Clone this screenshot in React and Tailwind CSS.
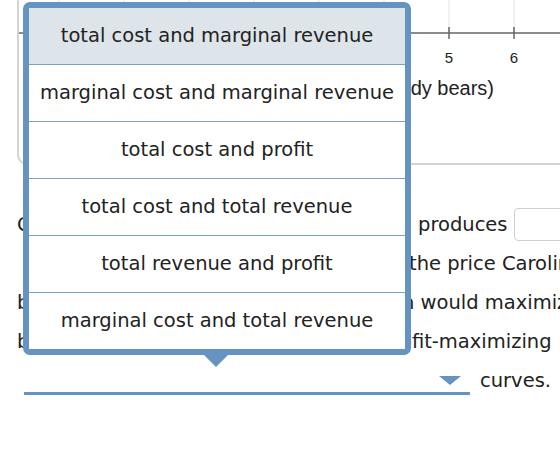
import React from 'react';

const options = [
  'total cost and marginal revenue',
  'marginal cost and marginal revenue',
  'total cost and profit',
  'total cost and total revenue',
  'total revenue and profit',
  'marginal cost and total revenue',
];

const ticks = [40, 105, 170, 235, 300, 365, 430, 495];

const QuantityAxis = () => (
  <svg width="600" height="140" className="block">
    {ticks.map((x) => (
      <line key={`g${x}`} x1={x} y1="0" x2={x} y2="33" stroke="#e3e3e3" strokeWidth="1" />
    ))}
    <line x1="0" y1="33" x2="600" y2="33" stroke="#666" strokeWidth="1.5" />
    {ticks.map((x) => (
      <line key={`t${x}`} x1={x} y1="27" x2={x} y2="39" stroke="#666" strokeWidth="1.5" />
    ))}
    <text x="430" y="63" textAnchor="middle" fontSize="15" fill="#222" fontFamily="Liberation Sans, Arial, sans-serif">5</text>
    <text x="495" y="63" textAnchor="middle" fontSize="15" fill="#222" fontFamily="Liberation Sans, Arial, sans-serif">6</text>
    <text x="475" y="95" textAnchor="end" fontSize="20" fill="#222" fontFamily="Liberation Sans, Arial, sans-serif">
      Quantity (teddy bears)
    </text>
  </svg>
);

export default function App() {
  return (
    <div className="relative w-[560px] h-[458px] overflow-hidden bg-white text-[19.5px] text-[#222] font-['DejaVu_Sans',Verdana,sans-serif]">
      {/* graph card, top cut off */}
      <div className="ml-[17px] h-[165px] w-[600px] rounded-b-[10px] border-2 border-t-0 border-[#d4d4d4] overflow-hidden">
        <QuantityAxis />
      </div>

      {/* question text */}
      <div className="mt-[40px] flex flex-col whitespace-nowrap">
        <div className="flex h-[39px] items-center">
          <span className="w-[418px] shrink-0 overflow-hidden pl-[17px]">Caroline&apos;s Cuddly Toys</span>
          <span className="shrink-0">produces</span>
          <span className="ml-[6px] h-[33px] w-[80px] shrink-0 rounded-sm border border-[#cfcfcf]" />
        </div>
        <div className="flex h-[39px] items-center">
          <span className="w-[409px] shrink-0" />
          <span className="shrink-0">the price Caroline</span>
        </div>
        <div className="flex h-[39px] items-center">
          <span className="w-[402px] shrink-0 overflow-hidden pl-[17px]">bears a day. The quantity that wou</span>
          <span className="shrink-0">n would maximize</span>
        </div>
        <div className="flex h-[39px] items-center">
          <span className="w-[380px] shrink-0 overflow-hidden pl-[17px]">by comparing the pro</span>
          <span className="shrink-0">profit-maximizing</span>
        </div>
        <div className="flex h-[39px] items-center">
          <div className="relative ml-[24px] h-[28px] w-[446px] shrink-0 border-b-[3px] border-[#6694c1]">
            <span className="absolute right-[9px] top-[9px] h-0 w-0 border-x-[11px] border-t-[9px] border-x-transparent border-t-[#6694c1]" />
          </div>
          <span className="ml-[10px] shrink-0">curves.</span>
        </div>
      </div>

      {/* open dropdown menu */}
      <div className="absolute left-[23px] top-[2px] w-[388px] rounded-[7px] border-[6px] border-[#6694c1] bg-white">
        {options.map((opt, i) => (
          <div
            key={opt}
            className={`flex items-center justify-center whitespace-nowrap ${
              i < options.length - 1 ? 'h-[57px] border-b border-[#78a1cb]' : 'h-[56px]'
            } ${i === 0 ? 'bg-[#dee5ea]' : 'bg-white'}`}
          >
            {opt}
          </div>
        ))}
      </div>
      <span className="absolute left-[204px] top-[355px] h-0 w-0 border-x-[12px] border-t-[12px] border-x-transparent border-t-[#6694c1]" />
    </div>
  );
}
